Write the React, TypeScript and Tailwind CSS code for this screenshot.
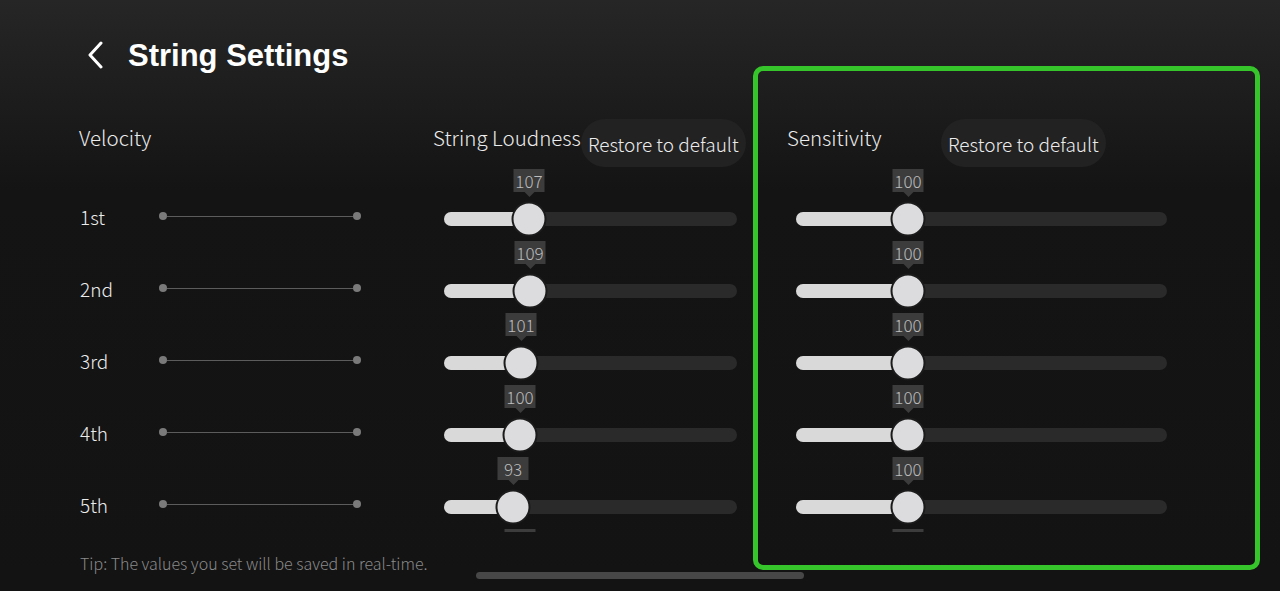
import React from "react";

const loud = [
  { v: 107, p: 85 },
  { v: 109, p: 86 },
  { v: 101, p: 77 },
  { v: 100, p: 76 },
  { v: 93, p: 69 },
  { v: 0, p: 76, hidden: true },
];
const sens = [
  ...[100, 100, 100, 100, 100].map((v) => ({ v, p: 112, hidden: false })),
  { v: 0, p: 112, hidden: true },
];
const labels = ["1st", "2nd", "3rd", "4th", "5th"];

function Thumbed({ pos, value, wide, hidden }: { pos: number; value: number; wide: boolean; hidden?: boolean }) {
  return (
    <div className={`relative h-[14px] rounded-full bg-[#2a2a2a] ${wide ? "w-[371px]" : "w-[293px]"}`}>
      <div className="absolute left-0 top-0 h-full rounded-l-full bg-[#d9d9d9]" style={{ width: pos }} />
      <div
        className="absolute top-1/2 h-[35px] w-[35px] -translate-x-1/2 -translate-y-1/2 rounded-full border-2 border-[#1b1b1b] bg-[#dcdcdf]"
        style={{ left: pos }}
      />
      <div className="absolute bottom-[29px] flex -translate-x-1/2 flex-col items-center" style={{ left: pos }}>
        <div className="h-[23px] w-[31px] bg-[#3c3c3c] text-center text-[17px] leading-[23px] text-[#bdbdbd]">
          {hidden ? "" : value}
        </div>
        <div className="h-0 w-0 border-x-[5px] border-t-[5px] border-x-transparent border-t-[#3c3c3c]" />
      </div>
    </div>
  );
}

function Row({ children }: { children: React.ReactNode }) {
  return <div className="flex h-[72px] shrink-0 items-center pt-[32px]">{children}</div>;
}

function RestoreButton() {
  return (
    <div className="flex h-[48px] items-center rounded-full bg-[#222222] px-[7px] pt-[3px] text-[19px] text-[#ececec]">
      Restore to default
    </div>
  );
}

export default function App() {
  return (
    <div
      className="relative h-[591px] w-full overflow-hidden bg-[linear-gradient(180deg,#262626_0%,#1c1c1c_18%,#141414_32%,#131313_100%)] font-light text-[#ececec]"
      style={{ fontFamily: '"Noto Sans CJK SC", "Noto Sans", sans-serif' }}
    >
      {/* header */}
      <div className="flex h-[110px] items-center pl-[86px]">
        <svg width="20" height="28" viewBox="0 0 20 28" fill="none" className="mr-[22px]">
          <path d="M15 2 L4 14 L15 26" stroke="#ffffff" strokeWidth="3" strokeLinecap="round" strokeLinejoin="round" />
        </svg>
        <h1
          className="text-[31px] font-bold leading-none text-white"
          style={{ fontFamily: '"Liberation Sans", Arial, sans-serif' }}
        >
          String Settings
        </h1>
      </div>

      {/* columns */}
      <div className="flex pl-[79px] pt-[9px]">
        {/* velocity */}
        <div className="w-[354px] shrink-0">
          <div className="flex h-[48px] items-center pb-[12px] text-[20.5px]">Velocity</div>
          <div className="flex h-[365px] flex-col overflow-hidden">
            {labels.map((l) => (
              <Row key={l}>
                <div className="w-[80px] pb-[6px] pl-[1px] text-[19px] leading-none">{l}</div>
                <div className="mb-[6px] flex h-[8px] w-[202px] items-center">
                  <div className="h-[8px] w-[8px] rounded-full bg-[#7a7a7a]" />
                  <div className="h-px flex-1 bg-[#5c5c5c]" />
                  <div className="h-[8px] w-[8px] rounded-full bg-[#7a7a7a]" />
                </div>
              </Row>
            ))}
          </div>
        </div>

        {/* loudness */}
        <div className="w-[354px] shrink-0">
          <div className="flex h-[48px] items-center">
            <span className="pb-[12px] text-[20.5px]">String Loudness</span>
            <RestoreButton />
          </div>
          <div className="flex h-[365px] flex-col overflow-hidden">
            {loud.map((r, i) => (
              <Row key={i}>
                <div className="pl-[11px]">
                  <Thumbed pos={r.p} value={r.v} wide={false} hidden={r.hidden} />
                </div>
              </Row>
            ))}
          </div>
        </div>

        {/* sensitivity */}
        <div className="w-[420px] shrink-0">
          <div className="flex h-[48px] items-center">
            <span className="w-[154px] pb-[12px] text-[20.5px]">Sensitivity</span>
            <RestoreButton />
          </div>
          <div className="flex h-[365px] flex-col overflow-hidden">
            {sens.map((r, i) => (
              <Row key={i}>
                <div className="pl-[9px]">
                  <Thumbed pos={r.p} value={r.v} wide={true} hidden={r.hidden} />
                </div>
              </Row>
            ))}
          </div>
        </div>
      </div>

      <div className="mt-[19px] pl-[80px] text-[16px] leading-[24px] text-[#8a8a8a]">
        Tip: The values you set will be saved in real-time.
      </div>

      {/* scroll indicator */}
      <div className="absolute left-[476px] top-[572px] h-[7px] w-[328px] rounded-full bg-[#474747]" />

      {/* highlight box */}
      <div className="pointer-events-none absolute left-[753px] top-[66px] h-[504px] w-[507px] rounded-[10px] border-[5px] border-[#36c52a]" />
    </div>
  );
}
